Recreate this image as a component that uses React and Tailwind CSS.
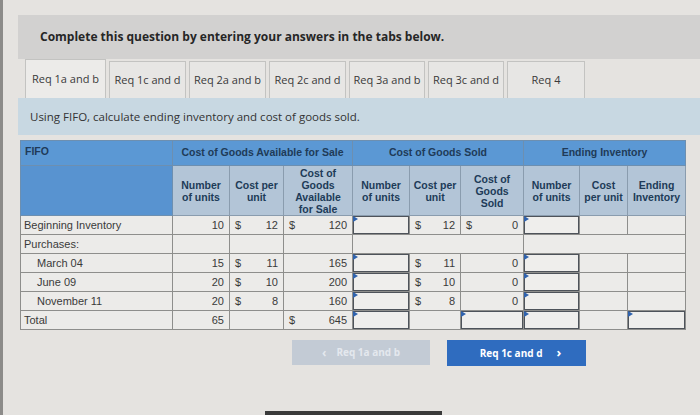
import React from 'react';

const tabs = ['Req 1a and b', 'Req 1c and d', 'Req 2a and b', 'Req 2c and d', 'Req 3a and b', 'Req 3c and d', 'Req 4'];
const tabWidths = ['w-[81px]', 'w-[77px]', 'w-[77px]', 'w-[77px]', 'w-[76px]', 'w-[76px]', 'w-[78px]'];

const rows = [
  { label: 'Beginning Inventory', units: '10', cost: '12', avail: '120', availDollar: true, cgsCost: '12', cgs: '0', cgsDollar: true },
  { label: 'Purchases:', section: true },
  { label: 'March 04', indent: true, units: '15', cost: '11', avail: '165', cgsCost: '11', cgs: '0' },
  { label: 'June 09', indent: true, units: '20', cost: '10', avail: '200', cgsCost: '10', cgs: '0' },
  { label: 'November 11', indent: true, units: '20', cost: '8', avail: '160', cgsCost: '8', cgs: '0' },
  { label: 'Total', total: true, units: '65', avail: '645', availDollar: true },
];

const cell = 'border border-[#8e8e8c] bg-[#ecebe9] px-[5px] h-[19px] py-0 leading-[17px] align-middle';
const sub = 'bg-[#b3c5d7] border border-[#8a9cae] px-[3px]';

const Money = ({ dollar, value }) => (
  <div className="flex justify-between">
    <span>{dollar ? '$' : ''}</span>
    <span>{value}</span>
  </div>
);

const InputCell = () => (
  <td className="border border-[#8e8e8c] p-0 h-[19px]">
    <div className="relative h-[18px] border-[1.5px] border-[#4e535a] bg-[#efeeec]">
      <span className="absolute -top-[1px] -left-[1px] w-0 h-0 border-l-[5px] border-l-[#2f62ad] border-y-[3px] border-y-transparent" />
    </div>
  </td>
);

const App = () => {
  return (
    <div className="w-[700px] h-[415px] overflow-hidden bg-[#e5e3e0] border-l-[3px] border-[#8c8b89] pl-[15px] pt-[15px] font-['Open_Sans',sans-serif]">
      <div className="h-[44px] bg-[#d2d1d0] pl-[22px] flex items-center text-[12px] font-bold text-[#262626]">
        Complete this question by entering your answers in the tabs below.
      </div>

      <div className="flex gap-[3px] pl-[7px] items-end">
        {tabs.map((t, i) => (
          <div
            key={t}
            className={`${tabWidths[i]} ${i === 0 ? 'h-[39px] bg-[#ecebe9]' : 'h-[37px] bg-[#e7e6e4]'} border border-b-0 border-[#c3c3c1] flex items-center justify-center text-[11px] text-[#3a3a3a]`}
          >
            {t}
          </div>
        ))}
      </div>

      <div className="h-[37px] bg-[#c8d8e2] pl-[12px] flex items-center text-[11.5px] text-[#333]">
        Using FIFO, calculate ending inventory and cost of goods sold.
      </div>

      <table className="mt-[5px] ml-[2px] w-[665px] table-fixed border-collapse font-['Liberation_Sans',Arial,sans-serif] text-[11px] text-[#3a3a3a]">
        <colgroup>
          <col className="w-[152px]" />
          <col className="w-[57px]" />
          <col className="w-[54px]" />
          <col className="w-[69px]" />
          <col className="w-[57px]" />
          <col className="w-[51px]" />
          <col className="w-[63px]" />
          <col className="w-[56px]" />
          <col className="w-[48px]" />
          <col className="w-[58px]" />
        </colgroup>
        <thead className="font-bold text-[#203b58] text-[10.5px]">
          <tr className="h-[25px]">
            <th className="bg-[#5b98d4] border border-[#6d8fb0] text-left align-top pl-[4px] pt-[3px]">FIFO</th>
            <th colSpan={3} className="bg-[#5b98d4] border border-[#6d8fb0]">Cost of Goods Available for Sale</th>
            <th colSpan={3} className="bg-[#5b98d4] border border-[#6d8fb0]">Cost of Goods Sold</th>
            <th colSpan={3} className="bg-[#5b98d4] border border-[#6d8fb0]">Ending Inventory</th>
          </tr>
          <tr className="h-[50px] leading-[12px]">
            <th className="bg-[#5893d0] border border-[#6d8fb0]" />
            <th className={sub}>Number of units</th>
            <th className={sub}>Cost per unit</th>
            <th className={`${sub} px-[8px]`}>Cost of Goods Available for Sale</th>
            <th className={sub}>Number of units</th>
            <th className={sub}>Cost per unit</th>
            <th className={`${sub} px-[10px]`}>Cost of Goods Sold</th>
            <th className={sub}>Number of units</th>
            <th className="bg-[#b3c5d7] border border-[#8a9cae] px-[1px]">Cost<br />per unit</th>
            <th className="bg-[#b3c5d7] border border-[#8a9cae] px-0">Ending Inventory</th>
          </tr>
        </thead>
        <tbody>
          {rows.map((r) =>
            r.section ? (
              <tr key={r.label}>
                <td className={`${cell} pl-[3px]`}>{r.label}</td>
                <td className={cell} />
                <td className={cell} />
                <td className={cell} />
                <td colSpan={3} className={cell} />
                <td colSpan={3} className={cell} />
              </tr>
            ) : (
              <tr key={r.label}>
                <td className={`${cell} ${r.indent ? 'pl-[16px]' : 'pl-[3px]'}`}>{r.label}</td>
                <td className={`${cell} text-right`}>{r.units}</td>
                <td className={cell}>{r.cost && <Money dollar value={r.cost} />}</td>
                <td className={cell}><Money dollar={r.availDollar} value={r.avail} /></td>
                <InputCell />
                <td className={cell}>{r.cgsCost && <Money dollar value={r.cgsCost} />}</td>
                {r.total ? <InputCell /> : <td className={cell}><Money dollar={r.cgsDollar} value={r.cgs} /></td>}
                <InputCell />
                <td className={cell} />
                {r.total ? <InputCell /> : <td className={cell} />}
              </tr>
            )
          )}
        </tbody>
      </table>

      <div className="flex gap-[17px] pl-[274px] mt-[10px] items-start">
        <button className="w-[138px] h-[25px] bg-[#c3cbd5] text-[#e4e8ee] text-[10px] font-bold flex items-center justify-center gap-[10px]">
          <span className="text-[12px]">‹</span>
          <span>Req 1a and b</span>
        </button>
        <button className="w-[139px] h-[26px] bg-[#2f6cbf] text-white text-[10px] font-bold flex items-center justify-center gap-[14px] pl-[8px]">
          <span>Req 1c and d</span>
          <span className="text-[13px]">›</span>
        </button>
      </div>

      <div className="mt-[45px] ml-[247px] w-[177px] h-[6px] bg-[#3a3a3a]" />
    </div>
  );
};

export default App;
